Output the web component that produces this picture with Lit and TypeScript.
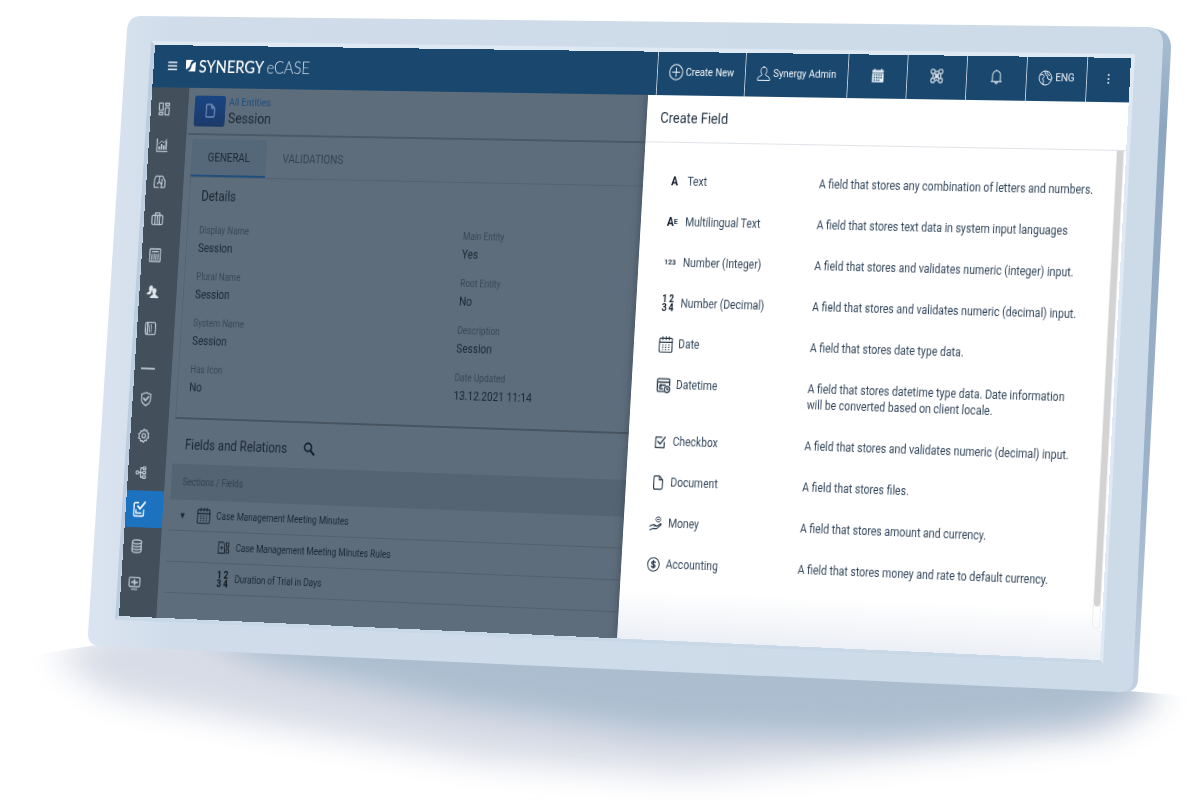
import { LitElement, html, css, svg } from "lit";
import { customElement, state } from "lit/decorators.js";
import { styleMap } from "lit/directives/style-map.js";

type Point = [number, number];

/** Corners of the glass as fractions of the scene: top left, top right, bottom right, bottom left. */
const CORNERS: Point[] = [
  [155 / 1200, 45 / 800],
  [1131 / 1200, 58 / 800],
  [1100 / 1200, 660 / 800],
  [119 / 1200, 616 / 800],
];

/** Homography that carries a w x h box onto the four given corners. */
function projection(w: number, h: number, c: Point[]): string {
  const [[x0, y0], [x1, y1], [x2, y2], [x3, y3]] = c;
  const dx1 = x1 - x2, dx2 = x3 - x2, sx = x0 - x1 + x2 - x3;
  const dy1 = y1 - y2, dy2 = y3 - y2, sy = y0 - y1 + y2 - y3;
  const den = dx1 * dy2 - dx2 * dy1;
  const g = (sx * dy2 - dx2 * sy) / den;
  const k = (dx1 * sy - sx * dy1) / den;
  const m = [
    (x1 - x0 + g * x1) / w, (y1 - y0 + g * y1) / w, 0, g / w,
    (x3 - x0 + k * x3) / h, (y3 - y0 + k * y3) / h, 0, k / h,
    0, 0, 1, 0,
    x0, y0, 0, 1,
  ];
  return `matrix3d(${m.map((n) => n.toFixed(9)).join(",")})`;
}

const glyph = (body: unknown, size = 16, stroke = 1.3) => html`<svg
  width=${size} height=${size} viewBox="0 0 16 16" fill="none" stroke="currentColor"
  stroke-width=${stroke} stroke-linecap="round" stroke-linejoin="round" aria-hidden="true">${body}</svg>`;

const art = {
  menu: svg`<path d="M2 4h12M2 8h12M2 12h12" stroke-width="1.6" stroke-linecap="butt"/>`,
  plus: svg`<circle cx="8" cy="8" r="7.3"/><path d="M8 4v8M4 8h8"/>`,
  user: svg`<path d="M8 1C5.700 1 4.600 2.700 4.600 4.700c0 1.600.6 3.100 1.600 4C5.700 10.200 1 10.300 1 13.200V14.500h14v-1.300c0-2.900-4.700-3-5.200-4.500 1-.9 1.600-2.400 1.600-4C11.400 2.700 10.300 1 8 1z"/>`,
  solidCal: svg`<path d="M.5 1.800h2.300V.4h1.600v1.400h7.200V.4h1.600v1.400h2.300V4.200H.5zM.5 5.200h15v10.500H.5z" fill="currentColor" stroke="none"/><path d="M2.500 7.300h2M5.500 7.300h2M8.500 7.300h2M11.500 7.300h2M2.500 10.300h2M5.500 10.300h2M8.500 10.300h2M11.500 10.300h2M2.500 13.300h2M5.500 13.300h2M8.500 13.300h2" stroke="#1a476d" stroke-width="1.5" stroke-linecap="butt"/>`,
  network: svg`<path d="M5.500 5.500l5 5M10.500 5.500l-5 5"/><circle cx="8" cy="8" r="1.800"/><rect x="1" y="1" width="4.500" height="4.500" rx="1.500"/><rect x="10.500" y="1" width="4.500" height="4.500" rx="1.500"/><rect x="1" y="10.500" width="4.500" height="4.500" rx="1.500"/><rect x="10.500" y="10.500" width="4.500" height="4.500" rx="1.500"/><path d="M7 3q1 1.500 2 0M7 13q1-1.500 2 0M3 7q1.500 1 0 2M13 7q-1.500 1 0 2"/>`,
  bell: svg`<path d="M1.800 13h12.400M3.200 12.800V6.500a4.800 5 0 0 1 9.600 0v6.300M8 1.500V.7M6.300 13.500c.2 2.200 3.200 2.200 3.400 0"/>`,
  globe: svg`<circle cx="8" cy="8" r="7"/><path d="M2 5l3-.5 1.500 2-2 2.500L6 11l-.5 3.500M7 1.200l.5 3L10 6l1 3 2 .5 1.500 1M10 1.500L9.500 3.500l3 2"/>`,
  dots: svg`<path d="M7 2.500h2v2H7zM7 7h2v2H7zM7 11.500h2v2H7z" fill="currentColor" stroke="none"/>`,
  dashboard: svg`<path d="M1.500 1.500h5v8h-5zM1.500 12h5v2.500h-5zM9.500 1.500h5V4h-5zM9.500 6.500h5v8h-5z"/>`,
  chart: svg`<path d="M1.500 1v13.500H15"/><path d="M4.500 12.500V9M7.500 12.500V6.500M10.500 12.500V8M13.500 12.500V3" stroke-width="2.200" stroke-linecap="butt"/><path d="M4 6l3.500-3 3 2L14 1" stroke-width="1"/>`,
  lungs: svg`<path d="M6.500 14H2.200c-.8 0-1.200-.5-1.200-1.300V8c0-3 1-5.500 2.500-6.500h3c.8 0 1 .5 1 1.200v5L5 10M9.500 14h4.200c.8 0 1.300-.5 1.300-1.300V6.500L11.500 1.500H8M7.700 8l3 2.500v3M11 5v5"/>`,
  briefcase: svg`<rect x="1" y="4.500" width="14" height="10" rx="1.500"/><path d="M5 4.500V1.700h6v2.800M5 5v9.500M11 5v9.500M8 6v7"/>`,
  table: svg`<rect x="1" y="1" width="14" height="14" rx="1"/><path d="M4 4h8M4 6.800v6M6.700 6.800v6M9.300 6.800v6M12 6.800v6" stroke-width="1.500"/>`,
  users: svg`<path d="M5.500 1c2 0 2.800 1.500 2.600 3-.1 1-.6 2-1 2.600L6 8c.5 1.500-1 2-1 3H0c0-2.500 3.500-2.300 3.700-3.700C2.500 6 2.300 1 5.500 1zM10 4c2.200 0 3 1.600 2.800 3.300-.1 1.200-.7 2.200-1.200 2.700.2 2 4.400 1.800 4.400 5H4.500c0-3 3.800-3 4-5C7 8.500 6.500 4 10 4z" fill="#dfe6ec" stroke="none"/>`,
  book: svg`<rect x="1.500" y="1.500" width="13" height="13" rx="1.500"/><path d="M4.300 2v12" stroke-width="2"/><path d="M7 4v8M9 4v8" stroke-width=".9"/>`,
  shield: svg`<path d="M8 1l6 1.800v5c0 3.500-2.500 6-6 7.400-3.500-1.400-6-3.900-6-7.400v-5z"/><path d="M5 7.500l2.300 2.300L11.300 5.500" stroke-width="2"/>`,
  gear: svg`<path d="M8 .8l1.600 1.700 2.300-.4.500 2.300 2.200 1-.9 2.300.9 2.300-2.200 1-.5 2.300-2.300-.4L8 15.200l-1.600-1.700-2.300.4-.5-2.300-2.200-1 .9-2.300-.9-2.300 2.200-1 .5-2.300 2.300.4z"/><circle cx="8" cy="8" r="2.300"/>`,
  tree: svg`<circle cx="2.700" cy="8" r="1.700"/><path d="M4.500 8h5M7 8V3h3M7 8v5h3M10 2h3.500v2.500H10zM10 6.800h3.500v2.500H10zM10 11.600h3.500v2.500H10z"/>`,
  clipboard: svg`<path d="M7 1.500H3.700c-1 0-1.700.7-1.700 1.700v9.600c0 1 .7 1.700 1.700 1.700h8c1 0 1.800-.7 1.800-1.700V8.500M4.800 11.500h5.500M4.500 8.500v3"/><path d="M6.500 5L9 7.500l5.500-6.500" stroke-width="2"/>`,
  database: svg`<ellipse cx="8" cy="3.200" rx="6" ry="2.200"/><path d="M2 3.200v9.600c0 1.200 2.700 2.200 6 2.200s6-1 6-2.200V3.200M2 6.400c0 1.200 2.700 2.200 6 2.200s6-1 6-2.200M2 9.600c0 1.200 2.700 2.200 6 2.200s6-1 6-2.200"/>`,
  monitor: svg`<rect x="1" y="1.700" width="14" height="10.300" rx="1.500"/><path d="M4.500 14.800h7"/><path d="M4 7h2.500l1.500-2.500v5L9.500 7H12" stroke-width="1.800"/>`,
  file: svg`<path d="M4 1h5.500L13.500 5v8.700c0 .8-.5 1.300-1.300 1.300H4c-.7 0-1.200-.5-1.200-1.300V2.300C2.800 1.500 3.300 1 4 1zM9.500 1v4h4"/>`,
  search: svg`<circle cx="6.300" cy="6.300" r="4.700" stroke-width="2"/><path d="M10 10l4.500 4.500" stroke-width="2.600"/>`,
  calendar: svg`<rect x="1" y="2.300" width="14" height="13" rx="1"/><path d="M1 6h14M4.500 .8v2.700M8 .8v2.700M11.500 .8v2.700"/><path d="M4 8.500h8M4 10.700h8M4 12.900h8" stroke-dasharray="1.400 1.900" stroke-width="1" stroke-linecap="butt"/>`,
  rules: svg`<path d="M1 2h6l2 2v10H1zM3.500 8h3.500M5 6.500v3"/><path d="M11 2.500h3.500v3.500H11zM11 10h3.500v3.500H11zM11 8h3.500"/>`,
  datetime: svg`<path d="M8.500 14H2.500c-.8 0-1.200-.4-1.200-1.200V3.200c0-.8.4-1.200 1.200-1.200h11c.8 0 1.200.4 1.200 1.200V8M1.500 5.200h13M4 8h6M4 8v3.500h3M5.500 7.500v2"/><circle cx="12" cy="12" r="2.900"/><path d="M12 10.700V12h1.200"/>`,
  checkbox: svg`<path d="M13 8.500v5.700H2.200V3h7.500"/><path d="M5 7.700l2.700 2.700L14 3" stroke-width="1.500"/>`,
  money: svg`<path d="M1 11l3-1.500h3l2 1.200H6.500M9.500 11l4.800-3c1 .3.700 1.200.2 1.600L9.500 13.500h-5L1 15"/><path d="M10 1l2.800.4 1.400 2.300-1.500 2.300-2.900.3L8 4zM10 3.700h2" stroke-width="1"/>`,
  coin: svg`<circle cx="8" cy="8" r="7.200" stroke-width="1.200"/><path d="M10.300 6C9.900 5.300 9 5 8 5c-1.300 0-2.200.6-2.200 1.500C5.800 8.700 10.300 7.400 10.300 9.600c0 .9-1 1.500-2.300 1.500-1 0-1.900-.4-2.300-1.100M8 4v8" stroke-width="1.400"/>`,
};

const navIcons: [string, unknown][] = [
  ["Dashboard", art.dashboard], ["Reports", art.chart], ["Profiles", art.lungs], ["Cases", art.briefcase],
  ["Registers", art.table], ["People", art.users], ["Library", art.book], ["", null], ["Security", art.shield],
  ["Settings", art.gear], ["Workflows", art.tree], ["Entities", art.clipboard], ["Data", art.database],
  ["Monitoring", art.monitor],
];

const details: [string, string][] = [
  ["Display Name", "Session"], ["Main Entity", "Yes"],
  ["Plural Name", "Session"], ["Root Entity", "No"],
  ["System Name", "Session"], ["Description", "Session"],
  ["Has Icon", "No"], ["Date Updated", "13.12.2021 11:14"],
];

const quad = html`<span class="quad"><b>1</b><b>2</b><b>3</b><b>4</b></span>`;

const fieldTypes: [unknown, string, string][] = [
  [html`<b class="big">A</b>`, "Text", "A field that stores any combination of letters and numbers."],
  [html`<b class="big">A</b><b class="tiny">E</b>`, "Multilingual Text", "A field that stores text data in system input languages"],
  [html`<b class="tiny">123</b>`, "Number (Integer)", "A field that stores and validates numeric (integer) input."],
  [quad, "Number (Decimal)", "A field that stores and validates numeric (decimal) input."],
  [glyph(art.calendar, 17, 1.1), "Date", "A field that stores date type data."],
  [glyph(art.datetime, 17), "Datetime", "A field that stores datetime type data. Date information\nwill be converted based on client locale."],
  [glyph(art.checkbox, 15), "Checkbox", "A field that stores and validates numeric (decimal) input."],
  [glyph(art.file, 15, 1.3), "Document", "A field that stores files."],
  [glyph(art.money, 15, 1.2), "Money", "A field that stores amount and currency."],
  [glyph(art.coin, 15), "Accounting", "A field that stores money and rate to default currency."],
];

@customElement("app-topbar")
class AppTopbar extends LitElement {
  static styles = css`
    :host { display: block; }
    .bar { display: flex; height: 44px; background: #1a476d; color: #f2f6fa; }
    .brand { flex: 1; display: flex; align-items: center; padding-left: 16px; padding-bottom: 2px; }
    button {
      font: inherit; color: inherit; background: none; border: 0; padding: 0;
      display: flex; align-items: center; justify-content: center; gap: 3px; cursor: pointer;
    }
    .cell { border-left: 1px solid #c4cfdc; font-size: 11px; box-sizing: border-box; width: 68px; padding-bottom: 3px; }
    .create { width: 103px; }
    .admin { width: 119px; }
    .more { width: 49px; }
    .logo { display: flex; align-items: center; margin-left: 9px; font-family: Lato, sans-serif; font-size: 18px; line-height: 20px; color: #fff; text-decoration: none; }
    .logo svg { margin-right: 4px; }
    .name { font-weight: 500; }
    .product { font-weight: 300; color: #d5e0ea; margin-left: 3px; }
    svg { display: block; flex: none; }
  `;
  render() {
    return html`<header class="bar">
      <div class="brand">
        <button aria-label="Menu">${glyph(art.menu, 15)}</button>
        <a class="logo" href="#">
          <svg width="12" height="12" viewBox="0 0 12 12" aria-hidden="true">
            <path d="M0 0h9.500C7 .8 5.800 2.300 5.500 4.500c-.3 2.500-2 4.500-5.500 5.500z M12 2v10H2.500C5 11.200 6.300 9.700 6.600 7.500c.3-2.700 2-4.500 5.400-5.500z" fill="#fff"/>
          </svg>
          <span class="name">SYNERGY</span><span class="product">eCASE</span>
        </a>
      </div>
      <button class="cell create">${glyph(art.plus, 17, 1)}Create New</button>
      <button class="cell admin">${glyph(art.user, 16, 1)}Synergy Admin</button>
      <button class="cell" aria-label="Calendar">${glyph(art.solidCal, 14)}</button>
      <button class="cell" aria-label="Network">${glyph(art.network, 15, 1.2)}</button>
      <button class="cell" aria-label="Notifications">${glyph(art.bell, 15, 1.1)}</button>
      <button class="cell">${glyph(art.globe, 16, 1)}ENG</button>
      <button class="cell more" aria-label="More">${glyph(art.dots, 14)}</button>
    </header>`;
  }
}

@customElement("app-sidebar")
class AppSidebar extends LitElement {
  static styles = css`
    :host { display: block; background: #434f5a; }
    nav { display: flex; flex-direction: column; padding-top: 3px; color: #b9c6d2; }
    a { display: flex; align-items: center; justify-content: center; height: 38px; padding-right: 14px; color: inherit; }
    a.on { background: #1c72bf; color: #eaf3fb; }
    hr { width: 17px; height: 2px; margin: 22px 0 11px 8px; border: 0; background: #aebbc7; }
    svg { display: block; }
  `;
  render() {
    return html`<nav aria-label="Main">
      ${navIcons.map(([label, icon]) =>
        icon
          ? html`<a href="#" aria-label=${label} class=${label === "Entities" ? "on" : ""}>${glyph(icon, label === "Entities" ? 17 : 15, 1.5)}</a>`
          : html`<hr />`,
      )}
    </nav>`;
  }
}

@customElement("entity-page")
class EntityPage extends LitElement {
  static styles = css`
    :host { display: block; background: #5d6d7c; color: #1c2731; font-size: 12px; line-height: 16px; }
    .page { padding-left: 8px; }
    .head { display: flex; align-items: center; gap: 4px; height: 49px; border-bottom: 2px solid #4b5966; box-sizing: border-box; margin-left: -6px; padding-left: 6px; }
    .badge { width: 38px; height: 32px; border-radius: 3px; background: linear-gradient(#194583, #1c3a69); color: #6c8bb5; display: flex; align-items: center; justify-content: center; }
    .crumb { display: block; font-size: 11px; line-height: 16px; color: #214f7f; text-decoration: none; }
    h1, h2 { margin: 0; font-weight: 400; }
    h1 { font-size: 15px; line-height: 17px; }
    h2 { font-size: 14px; line-height: 18px; }
    .tabs { display: flex; padding-top: 4px; border-bottom: 1px solid #53626f; }
    .tabs button { font: inherit; border: 0; background: none; padding: 0 20px; height: 39px; color: #35434f; border-bottom: 2px solid transparent; }
    .tabs .on { background: #546879; color: #1c2a37; border-bottom-color: #1f4f7e; }
    .card { padding: 10px 0 0 14px; height: 238px; border-bottom: 2px solid #475460; border-left: 1px solid #546371; }
    dl { display: grid; grid-template-columns: 321px 1fr; margin: 18px 0 0; }
    dt { font-size: 10px; line-height: 18px; color: #3a4855; }
    dd { margin: 0 0 12px; line-height: 18px; }
    .bar { display: flex; align-items: center; gap: 20px; height: 46px; padding: 5px 0 0 14px; box-sizing: border-box; }
    .bar button { border: 0; background: none; padding: 0; color: #141d26; }
    table { width: 100%; border-collapse: collapse; font-size: 10px; text-align: left; }
    th { font-weight: 400; background: #556472; color: #35434f; height: 37px; padding: 0 0 0 14px; }
    td { height: 31px; padding: 0; border-bottom: 1px solid #52606d; }
    .row { display: flex; align-items: center; gap: 7px; padding-left: 12px; }
    .sub { padding-left: 62px; }
    .arrow { font-size: 9px; width: 15px; }
    .quad { display: grid; grid-template-columns: 8px 8px; font-size: 10px; line-height: 9px; text-align: center; width: 16px; color: #10171e; }
    svg { display: block; }
  `;
  render() {
    return html`<main class="page">
      <div class="head">
        <span class="badge">${glyph(art.file, 15, 1.6)}</span>
        <div><a class="crumb" href="#">All Entities</a><h1>Session</h1></div>
      </div>
      <div class="tabs" role="tablist">
        <button role="tab" class="on" aria-selected="true">GENERAL</button>
        <button role="tab" aria-selected="false">VALIDATIONS</button>
      </div>
      <section class="card">
        <h2>Details</h2>
        <dl>${details.map(([k, v]) => html`<div><dt>${k}</dt><dd>${v}</dd></div>`)}</dl>
      </section>
      <div class="bar"><h2>Fields and Relations</h2><button aria-label="Search">${glyph(art.search, 14)}</button></div>
      <table>
        <thead><tr><th>Sections / Fields</th></tr></thead>
        <tbody>
          <tr><td><div class="row"><span class="arrow">▼</span>${glyph(art.calendar, 17, 1.1)}Case Management Meeting Minutes</div></td></tr>
          <tr><td><div class="row sub">${glyph(art.rules, 15, 1.1)}Case Management Meeting Minutes Rules</div></td></tr>
          <tr><td><div class="row sub">${quad}Duration of Trial in Days</div></td></tr>
        </tbody>
      </table>
    </main>`;
  }
}

@customElement("create-field-panel")
class CreateFieldPanel extends LitElement {
  static styles = css`
    :host { display: flex; flex-direction: column; background: linear-gradient(#fff 91%, #eceff5); color: #33475c; font-size: 12px; line-height: 16px; box-shadow: -2px 0 8px #2c3a4766; }
    h2 { margin: 0; padding: 0 16px; height: 47px; line-height: 47px; font-size: 15px; font-weight: 400; color: #263646; border-bottom: 1px solid #dfe3e8; }
    .body { flex: 1; display: flex; }
    ul { flex: 1; list-style: none; margin: 0; padding: 31px 0 0 28px; }
    li { display: grid; grid-template-columns: 18px 147px 1fr; column-gap: 6px; padding-bottom: 25px; }
    .icon { display: flex; align-items: center; justify-content: center; height: 16px; color: #26384a; }
    .desc { white-space: pre-line; }
    .big { font-size: 12px; color: #111c28; }
    .tiny { font-size: 8px; }
    .quad { display: grid; grid-template-columns: 8px 8px; font-size: 10px; line-height: 9px; text-align: center; color: #111c28; }
    .track { width: 9px; height: 470px; margin-right: 2px; border: 1px solid #eceef0; border-top: 0; border-radius: 0 0 4px 4px; box-sizing: border-box; }
    .thumb { height: 448px; background: #d3d3d4; border-radius: 0 0 4px 4px; }
    svg { display: block; flex: none; }
  `;
  render() {
    return html`<h2>Create Field</h2>
      <div class="body">
        <ul>${fieldTypes.map(([icon, name, text]) => html`<li>
          <span class="icon">${icon}</span><span>${name}</span><span class="desc">${text}</span>
        </li>`)}</ul>
        <div class="track"><div class="thumb"></div></div>
      </div>`;
  }
}

@customElement("app-root")
class AppRoot extends LitElement {
  static styles = css`
    :host { display: block; overflow: hidden; background: #fff; font-family: Roboto, "Liberation Sans", sans-serif; }
    .scene { position: relative; width: 100%; aspect-ratio: 3 / 2; }
    .stage { display: block; width: 100%; height: 100%; }
    .screen {
      position: absolute; left: 0; top: 0; width: 96%; height: 74%;
      transform-origin: 0 0; overflow: hidden; display: grid;
      grid-template: 44px 1fr / 46px 1fr 552px; background: #5d6d7c;
    }
    app-topbar { grid-column: 1 / -1; z-index: 1; }
    app-sidebar, entity-page, create-field-panel { min-height: 0; }
  `;

  @state() private matrix = projection(1152, 592, CORNERS.map(([x, y]) => [x * 1200, y * 800] as Point));
  private watcher?: ResizeObserver;

  firstUpdated() {
    const scene = this.renderRoot.querySelector(".scene") as HTMLElement;
    this.watcher = new ResizeObserver(() => {
      const w = scene.clientWidth, h = scene.clientHeight;
      this.matrix = projection(w * 0.96, h * 0.74, CORNERS.map(([x, y]) => [x * w, y * h] as Point));
    });
    this.watcher.observe(scene);
  }

  disconnectedCallback() {
    super.disconnectedCallback();
    this.watcher?.disconnect();
  }

  render() {
    return html`<div class="scene">
      <svg class="stage" viewBox="0 0 1200 800" aria-hidden="true">
        <defs>
          <linearGradient id="face" x1="0" y1="0" x2="1" y2="0">
            <stop offset="0" stop-color="#dbe5f1"/><stop offset=".08" stop-color="#d1dcea"/>
            <stop offset=".5" stop-color="#cedbe9"/><stop offset="1" stop-color="#cddbe9"/>
          </linearGradient>
          <linearGradient id="side" x1="0" y1="0" x2="0" y2="1">
            <stop offset="0" stop-color="#a9bfd5"/><stop offset=".15" stop-color="#8da6bf"/>
            <stop offset=".7" stop-color="#9db3cb"/><stop offset="1" stop-color="#c3d2e2"/>
          </linearGradient>
          <filter id="wide" x="-20%" y="-80%" width="140%" height="260%"><feGaussianBlur stdDeviation="16"/></filter>
          <filter id="near" x="-20%" y="-80%" width="140%" height="260%"><feGaussianBlur stdDeviation="15"/></filter>
          <clipPath id="floor"><path d="M0 668L50 652L97 645L1128 691L1200 697V800H0z"/></clipPath>
        </defs>
        <g clip-path="url(#floor)">
          <path d="M52 655L130 620L1130 660L1166 700L1110 735L940 752L800 766L690 776L480 760L270 725L110 695z" fill="#d8dce6" filter="url(#wide)"/>
          <path d="M150 600L1130 640L1142 696L1080 722L880 737L660 732L460 705L260 662z" fill="#abbdcf" filter="url(#near)"/>
        </g>
        <path d="M1150 28q21 1 21 20L1138 680q-1 12-14 12z" fill="url(#side)"/>
        <path d="M141 16L1148 27q15 1 15 17L1133 680q-1 12-13 12L99 646q-11-1-11-12L127 30q1-14 14-14z" fill="url(#face)"/>
        <path d="M151 41L1135 54L1103 664L115 620z" fill="#dfe9f3"/>
        <path d="M151 41L155 45L119 616L115 620z" fill="#bccde0"/>
        <path d="M115 620L119 616L1100 660L1103 664z" fill="#c9d8e7"/>
      </svg>
      <div class="screen" style=${styleMap({ transform: this.matrix })}>
        <app-topbar></app-topbar>
        <app-sidebar></app-sidebar>
        <entity-page></entity-page>
        <create-field-panel></create-field-panel>
      </div>
    </div>`;
  }
}
